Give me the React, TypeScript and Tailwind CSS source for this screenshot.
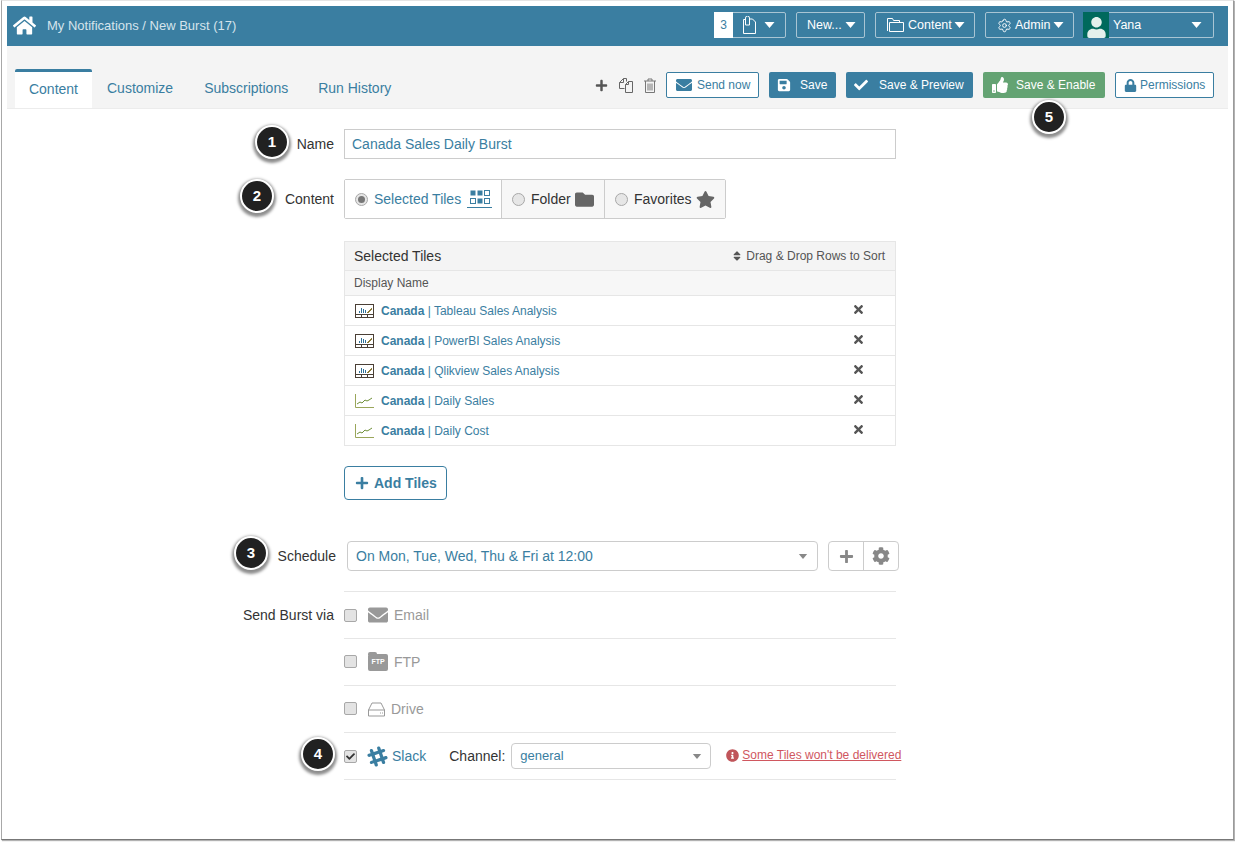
import React from "react";
import { Settings } from "lucide-react";
import { FaHome, FaEnvelope, FaSave, FaCheck, FaThumbsUp, FaLock, FaPlus, FaFolder, FaStar, FaTimes, FaCog, FaInfoCircle, FaUser, FaSort, FaSlackHash } from "react-icons/fa";

const Caret = ({ className = "" }: { className?: string }) => (
  <svg viewBox="0 0 10 6" className={className} fill="currentColor"><path d="M0 0h10L5 6z" /></svg>
);

const Badge = ({ n, className }: { n: number; className: string }) => (
  <div className={`absolute w-[34px] h-[34px] rounded-full bg-[#212121] border-[2px] border-white text-white font-bold text-[15px] flex items-center justify-center shadow-[0_2px_3px_2px_rgba(0,0,0,0.45)] ${className}`}>{n}</div>
);

const TopBtn = ({ children, className = "" }: { children: React.ReactNode; className?: string }) => (
  <div className={`h-[26px] border border-[#a9c5d4] rounded-[2px] flex items-center text-white text-[12.5px] ${className}`}>{children}</div>
);

const DashIcon = () => (
  <svg width="19" height="14" viewBox="0 0 19 14" className="shrink-0" shapeRendering="crispEdges">
    <rect x="0.5" y="0.5" width="18" height="13" fill="#fff" stroke="#4a3f35" />
    <path d="M0 10.5h19M6.5 10v4M12.5 10v4" stroke="#4a3f35" />
    <path d="M4.5 9V7M6.5 9V4M8.5 9V5M10.5 9V6" stroke="#2f6f96" />
    <path d="M12 8h1v-1h1v-1h1v-1h1v-1h1" stroke="#8a7a3a" fill="none" />
  </svg>
);

const LineIcon = () => (
  <svg width="19" height="14" viewBox="0 0 19 14" className="shrink-0">
    <path d="M0.5 0v13.5H19" stroke="#9aa65a" fill="none" />
    <path d="M2 10l3-2 2 1 3-3 2 1 2-1 3-2" stroke="#6f8f3a" fill="none" />
  </svg>
);

const TilesIcon = () => (
  <div className="flex flex-col items-center ml-[6px]">
    <svg width="20" height="15" viewBox="0 0 20 15" className="text-[#3a7ea1]">
      <rect x="0.5" y="0.5" width="5" height="5" fill="currentColor" />
      <rect x="7.5" y="0.5" width="5" height="5" fill="currentColor" />
      <rect x="14.5" y="0.5" width="5" height="5" fill="none" stroke="currentColor" />
      <rect x="0.5" y="8.5" width="5" height="5" fill="none" stroke="currentColor" />
      <rect x="7.5" y="8.5" width="5" height="5" fill="currentColor" />
      <rect x="14.5" y="8.5" width="5" height="5" fill="none" stroke="currentColor" />
    </svg>
    <div className="w-[25px] h-px bg-[#3a7ea1] mt-[2px]" />
  </div>
);

const Radio = ({ on = false }: { on?: boolean }) => (
  <span className="w-[13px] h-[13px] rounded-full border border-[#a8a8a8] bg-[#e6e6e6] flex items-center justify-center shrink-0">
    {on && <span className="w-[7px] h-[7px] rounded-full bg-[#777]" />}
  </span>
);

const Check2 = ({ on = false, className = "" }: { on?: boolean; className?: string }) => (
  <span className={`w-[13px] h-[13px] rounded-[2px] border border-[#a8a8a8] bg-[#e3e3e3] flex items-center justify-center shrink-0 text-[#333] ${className}`}>
    {on && <FaCheck size={9} />}
  </span>
);

const rows = [
  ["Tableau Sales Analysis", true],
  ["PowerBI Sales Analysis", true],
  ["Qlikview Sales Analysis", true],
  ["Daily Sales", false],
  ["Daily Cost", false],
] as const;

export default function App() {
  return (
    <div className="w-[1235px] h-[842px] bg-white overflow-hidden" style={{ fontFamily: '"Liberation Sans", Arial, sans-serif' }}>
      <div className="relative ml-px w-[1233px] h-[840px] border-l border-r border-b border-t border-l-[#a8a8a8] border-r-[#9a9a9a] border-b-[#777] border-t-[#e4e4e4] pt-[5px] px-[5px] shadow-[1px_1px_1px_rgba(0,0,0,0.3)]">
        {/* header */}
        <div className="h-[40px] bg-[#3a7ea1] flex items-center pl-[6px] pr-[14px] w-[1221px]">
          <FaHome size={23} className="text-white mb-[2px]" />
          <span className="ml-[11px] text-[#d5e4ec] text-[13px]">My Notifications / New Burst (17)</span>
          <div className="ml-auto mb-[2px] flex items-center gap-[10px]">
            <TopBtn className="w-[72px]">
              <span className="w-[19px] h-[26px] -ml-px bg-white text-[#3a7ea1] text-[12px] flex items-center justify-center">3</span>
              <svg width="13" height="18" viewBox="0 0 13 18" className="ml-[10px]" fill="none" stroke="#fff">
                <path d="M2.5 3.5H0.5v14h12V6l-3-3H7" />
                <path d="M2.5 9V2a1.5 1.5 0 0 1 4 0v7z" />
              </svg>
              <Caret className="w-[11px] h-[6px] ml-[8px]" />
            </TopBtn>
            <TopBtn className="w-[69px] pl-[10px]"><span>New...</span><Caret className="w-[11px] h-[6px] ml-[3px]" /></TopBtn>
            <TopBtn className="w-[100px] pl-[11px]">
              <svg width="17" height="14" viewBox="0 0 17 14" fill="none" stroke="#fff" className="shrink-0"><path d="M0.5 13V0.5h5l1 2h6v2M2.5 13.5V4.5h14v9z" /></svg>
              <span className="ml-[4px]">Content</span><Caret className="w-[11px] h-[6px] ml-[2px]" />
            </TopBtn>
            <TopBtn className="w-[89px] pl-[11px]">
              <Settings size={15} strokeWidth={1.5} className="shrink-0" />
              <span className="ml-[3px]">Admin</span><Caret className="w-[11px] h-[6px] ml-[3px]" />
            </TopBtn>
            <TopBtn className="w-[131px] pr-[11px] -ml-px border-l-0">
              <span className="w-[26px] h-[26px] bg-[#00695c] flex items-end justify-center text-[#e4f0ec] overflow-hidden"><FaUser size={21} /></span>
              <span className="ml-[4px]">Yana</span><Caret className="w-[11px] h-[6px] ml-auto" />
            </TopBtn>
          </div>
        </div>
        {/* tabs bar */}
        <div className="h-[63px] bg-[#f4f4f4] w-[1221px] flex items-end pl-[8px] pr-[14px] border-b border-[#ececec]">
          <div className="flex items-end text-[14px] text-[#3a7ea1]">
            <div className="w-[77px] h-[39px] pb-[2px] bg-white border-t-[3px] border-[#3a7ea1] rounded-t-[2px] flex items-center justify-center">Content</div>
            <div className="h-[39px] ml-[15px] flex items-center">Customize</div>
            <div className="h-[39px] ml-[31px] flex items-center">Subscriptions</div>
            <div className="h-[39px] ml-[30px] flex items-center">Run History</div>
          </div>
          <div className="ml-auto flex items-center h-[26px] mb-[10px] text-[12px]">
            <FaPlus size={13} className="text-[#555]" />
            <svg width="16" height="16" viewBox="0 0 16 16" className="ml-[10px]" fill="none" stroke="#666">
              <path d="M6.5 11.5h-5v-6l4-4h3v3" />
              <path d="M7.5 15.5h7v-11h-4l-3 3z" />
              <path d="M5.5 1.5v4h-4M10.5 4.5v3h-3" />
            </svg>
            <svg width="12" height="15" viewBox="0 0 12 15" className="ml-[10px]" fill="none" stroke="#777"><path d="M0 3h12M4 3V1h4v2M1.5 3v11.5h9V3M4 5.5v7M6 5.5v7M8 5.5v7" /></svg>
            <div className="ml-[10px] w-[93px] h-[26px] border border-[#3a7ea1] rounded-[2px] bg-white flex items-center pl-[9px] text-[#3a7ea1]">
              <FaEnvelope size={16} /><span className="ml-[5px]">Send now</span>
            </div>
            <div className="ml-[10px] w-[67px] h-[26px] bg-[#3a7ea1] rounded-[2px] flex items-center pl-[8px] text-white">
              <FaSave size={14} /><span className="ml-[9px]">Save</span>
            </div>
            <div className="ml-[10px] w-[127px] h-[26px] bg-[#3a7ea1] rounded-[2px] flex items-center pl-[8px] text-white">
              <FaCheck size={14} /><span className="ml-[11px]">Save &amp; Preview</span>
            </div>
            <div className="ml-[10px] w-[122px] h-[26px] bg-[#64a373] rounded-[2px] flex items-center pl-[9px] text-white">
              <FaThumbsUp size={16} /><span className="ml-[8px]">Save &amp; Enable</span>
            </div>
            <div className="ml-[10px] w-[99px] h-[26px] border border-[#3a7ea1] rounded-[2px] bg-white flex items-center pl-[8px] text-[#3a7ea1]">
              <FaLock size={13} className="shrink-0" /><span className="ml-[3px]">Permissions</span>
            </div>
          </div>
        </div>

        {/* form */}
        <div className="ml-[337px] mt-[20px] w-[552px] text-[14px] text-[#333]">
          <div className="relative h-[30px] border border-[#ccc] flex items-center px-[7px] text-[#3a7ea1]">
            Canada Sales Daily Burst
            <span className="absolute right-[561px] text-[#333]">Name</span>
          </div>
          <div className="relative mt-[20px] w-[382px] h-[40px] border border-[#ccc] rounded-[2px] flex items-stretch">
            <span className="absolute right-[391px] top-[9px] text-[#333]">Content</span>
            <div className="w-[156px] flex items-center pl-[10px] text-[#3a7ea1] bg-white">
              <Radio on /><span className="ml-[6px]">Selected Tiles</span><TilesIcon />
            </div>
            <div className="w-[103px] flex items-center pl-[10px] bg-[#f7f7f7] border-l border-[#ccc]">
              <Radio /><span className="ml-[6px]">Folder</span><FaFolder size={19} className="ml-[4px] text-[#666]" />
            </div>
            <div className="flex-1 flex items-center pl-[10px] bg-[#f7f7f7] border-l border-[#ccc]">
              <Radio /><span className="ml-[6px]">Favorites</span><FaStar size={19} className="ml-[4px] text-[#666]" />
            </div>
          </div>

          <div className="mt-[22px] border border-[#e6e6e6]">
            <div className="h-[29px] bg-[#f4f4f4] border-b border-[#e6e6e6] flex items-center justify-between pl-[9px] pr-[10px]">
              <span>Selected Tiles</span>
              <span className="flex items-center text-[12px] text-[#555]"><FaSort size={12} className="mr-[3px]" />Drag &amp; Drop Rows to Sort</span>
            </div>
            <div className="h-[24px] bg-[#f7f7f7] flex items-center px-[9px] text-[12px] text-[#555]">Display Name</div>
            {rows.map(([name, dash]) => (
              <div key={name} className="h-[30px] border-t border-[#e6e6e6] flex items-center pl-[10px] pr-[30px] text-[12px] text-[#3a7ea1]">
                {dash ? <DashIcon /> : <LineIcon />}
                <span className="ml-[7px]"><b>Canada</b> | {name}</span>
                <FaTimes size={13} className="ml-auto mb-[2px] text-[#555]" />
              </div>
            ))}
          </div>

          <div className="mt-[20px] w-[103px] h-[34px] border border-[#3a7ea1] rounded-[4px] flex items-center pl-[10px] text-[#3a7ea1] font-bold">
            <FaPlus size={14} /><span className="ml-[5px]">Add Tiles</span>
          </div>

          <div className="relative mt-[41px] ml-[3px] flex items-center h-[30px] w-[552px]">
            <span className="absolute right-[563px] text-[#333]">Schedule</span>
            <div className="w-[471px] h-[30px] border border-[#ccc] rounded-[4px] flex items-center pl-[8px] pr-[9px] text-[#3a7ea1] shrink-0">
              On Mon, Tue, Wed, Thu &amp; Fri at 12:00
              <Caret className="w-[10px] h-[5px] ml-auto text-[#888]" />
            </div>
            <div className="ml-[10px] w-[71px] h-[30px] border border-[#ccc] rounded-[4px] flex shrink-0">
              <div className="w-[35px] flex items-center justify-center border-r border-[#ccc]"><FaPlus size={15} className="text-[#888]" /></div>
              <div className="flex-1 flex items-center justify-center"><FaCog size={18} className="text-[#888]" /></div>
            </div>
          </div>

          <div className="mt-[20px] border-t border-[#e6e6e6]">
            <div className="relative h-[47px] border-b border-[#e6e6e6] flex items-center text-[#999]">
              <span className="absolute right-[562px] text-[#333] whitespace-nowrap">Send Burst via</span>
              <Check2 /><FaEnvelope size={20} className="ml-[11px] text-[#999]" /><span className="ml-[6px]">Email</span>
            </div>
            <div className="h-[47px] border-b border-[#e6e6e6] flex items-center text-[#999]">
              <Check2 className="mb-[2px]" />
              <span className="ml-[11px] relative w-[20px] h-[17px] bg-[#999] rounded-[2px] text-white text-[7px] font-bold flex items-center justify-center">
                FTP
                <span className="absolute -top-[2px] left-0 w-[9px] h-[3px] bg-[#999] rounded-t-[2px]" />
              </span>
              <span className="ml-[6px]">FTP</span>
            </div>
            <div className="h-[47px] border-b border-[#e6e6e6] flex items-center text-[#999]">
              <Check2 className="mb-[2px]" />
              <svg width="17" height="15" viewBox="0 0 17 15" fill="none" stroke="#999" className="ml-[11px]"><path d="M4 1h9l3.5 7v6h-16V8zM0.5 8h16M12 11h1M14 11h1" /></svg>
              <span className="ml-[6px]">Drive</span>
            </div>
            <div className="h-[47px] border-b border-[#e6e6e6] flex items-center">
              <Check2 on />
              <FaSlackHash size={23} className="ml-[9px] text-[#3a7ea1] shrink-0" />
              <span className="ml-[3px] text-[#3a7ea1]">Slack</span>
              <span className="ml-[23px]">Channel:</span>
              <div className="ml-[6px] w-[200px] h-[26px] border border-[#ccc] rounded-[4px] flex items-center px-[8px] text-[13px] text-[#3a7ea1] shrink-0">
                general<Caret className="w-[10px] h-[5px] ml-auto text-[#888]" />
              </div>
              <FaInfoCircle size={13} className="ml-[15px] mb-[2px] text-[#c0555a] shrink-0" />
              <span className="ml-[3px] mb-[2px] text-[12px] text-[#d0575f] underline whitespace-nowrap">Some Tiles won't be delivered</span>
            </div>
          </div>
        </div>

        <Badge n={1} className="left-[253px] top-[124px]" />
        <Badge n={2} className="left-[238px] top-[178px]" />
        <Badge n={3} className="left-[232px] top-[535px]" />
        <Badge n={4} className="left-[299px] top-[736px]" />
        <Badge n={5} className="left-[1030px] top-[99px]" />
      </div>
    </div>
  );
}
